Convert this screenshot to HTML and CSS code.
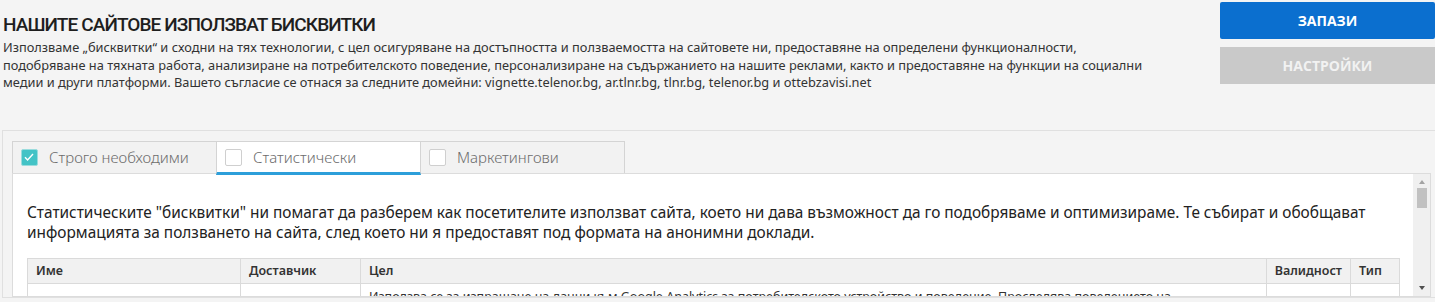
FILE: index.html
```html
<!DOCTYPE html>
<html lang="bg">
<head>
	<meta charset="utf-8">
	<title>Бисквитки</title>
	<link rel="stylesheet" href="styles.css">
</head>
<body>
	<div id="banner">
		<div class="intro">
			<h1 class="title">НАШИТЕ САЙТОВЕ ИЗПОЛЗВАТ БИСКВИТКИ</h1>
			<p class="lead">Използваме „бисквитки“ и сходни на тях технологии, с цел осигуряване на достъпността и ползваемостта на сайтовете ни, предоставяне на определени функционалности,<br>подобряване на тяхната работа, анализиране на потребителското поведение, персонализиране на съдържанието на нашите реклами, както и предоставяне на функции на социални<br>медии и други платформи. Вашето съгласие се отнася за следните домейни: vignette.telenor.bg, ar.tlnr.bg, tlnr.bg, telenor.bg и ottebzavisi.net</p>
		</div>
		<div class="actions">
			<button class="btn btn-save">ЗАПАЗИ</button>
			<button class="btn btn-settings">НАСТРОЙКИ</button>
		</div>
	</div>

	<div id="panel">
		<ul class="tabs">
			<li class="tab">
				<span class="check checked">
					<svg width="16" height="16" viewBox="0 0 16 16"><path d="M4 8.2l2.6 2.8L12 5" fill="none" stroke="#fff" stroke-width="1.4"/></svg>
				</span>
				Строго необходими
			</li>
			<li class="tab current">
				<span class="check"></span>
				Статистически
			</li>
			<li class="tab">
				<span class="check"></span>
				Маркетингови
			</li>
		</ul>

		<div class="tab-body">
			<div class="tab-content">
				<p class="desc">Статистическите "бисквитки" ни помагат да разберем как посетителите използват сайта, което ни дава възможност да го подобряваме и оптимизираме. Те събират и обобщават информацията за ползването на сайта, след което ни я предоставят под формата на анонимни доклади.</p>
				<table class="cookies">
					<tr>
						<th class="c-name">Име</th>
						<th class="c-vendor">Доставчик</th>
						<th class="c-goal">Цел</th>
						<th class="c-valid">Валидност</th>
						<th class="c-type">Тип</th>
					</tr>
					<tr>
						<td></td>
						<td></td>
						<td>Използва се за изпращане на данни към Google Analytics за потребителското устройство и поведение. Проследява поведението на</td>
						<td></td>
						<td></td>
					</tr>
				</table>
			</div>
			<div class="scrollbar">
				<span class="arrow up"></span>
				<span class="thumb"></span>
				<span class="arrow down"></span>
			</div>
		</div>
	</div>
</body>
</html>
```

FILE: styles.css
```css
*{
	margin: 0;
	padding: 0;
	box-sizing: border-box;
}
html{
	background: #f4f4f4;
}
body{
	font-family: "Noto Sans", "Open Sans", sans-serif;
	color: #222;
	height: 302px;
	overflow: hidden;
}
li{
	list-style: none;
}
#banner{
	display: flex;
	justify-content: space-between;
	padding-left: 3px;
}
.title{
	margin-top: 13px;
	font-family: Roboto, sans-serif;
	font-size: 19px;
	line-height: 24px;
	font-weight: 500;
	letter-spacing: -0.9px;
	color: #1e1e1e;
}
.lead{
	margin-top: 2px;
	font-size: 12.8px;
	line-height: 17.5px;
	color: #333;
	white-space: nowrap;
}
.actions{
	width: 215px;
	padding-top: 2px;
	display: flex;
	flex-direction: column;
	gap: 8px;
}
.btn{
	height: 37px;
	border: none;
	border-radius: 2px;
	font-family: "Open Sans", sans-serif;
	font-size: 14px;
	font-weight: 700;
	color: #fff;
}
.btn-save{
	background: #0b6fcf;
}
.btn-settings{
	background: #c9c9c9;
	color: #f2f2f2;
	border-radius: 0;
}
#panel{
	margin: 38px 0 0 2px;
	border: 1px solid #e0e0e0;
	border-right: none;
	padding: 10px 4px 0 9px;
}
.tabs{
	display: flex;
}
.tab{
	width: 205px;
	height: 32px;
	display: flex;
	align-items: center;
	gap: 11px;
	padding-left: 8px;
	border: 1px solid #d4d4d4;
	border-bottom: none;
	margin-right: -1px;
	background: #f2f2f2;
	font-size: 15px;
	font-weight: 300;
	color: #6c6c6c;
	cursor: pointer;
}
.tab.current{
	background: #fff;
	border-bottom: 3px solid #2d9fda;
	position: relative;
	z-index: 1;
	margin-bottom: -2px;
	height: 34px;
	padding-top: 1px;
}
.check{
	width: 17px;
	height: 17px;
	border: 1px solid #cfcfcf;
	border-radius: 2px;
	background: #fff;
	flex-shrink: 0;
}
.check.checked{
	background: #43c3c6;
	border-color: #9adcdd;
}
.check svg{
	display: block;
	margin: -1px;
}
.tab-body{
	display: flex;
	height: 124px;
	border: 1px solid #dcdcdc;
	background: #fff;
	overflow: hidden;
}
.tab-content{
	flex: 1;
	padding: 29px 13px 0 14px;
	overflow: hidden;
}
.desc{
	font-size: 15.4px;
	line-height: 20px;
	color: #222;
}
.cookies{
	margin-top: 15px;
	width: 100%;
	border-collapse: collapse;
	font-size: 12.5px;
	color: #333;
}
.cookies th,
.cookies td{
	border: 1px solid #dadada;
	text-align: left;
	padding: 3px 8px 4px;
	vertical-align: top;
}
.cookies th{
	background: #f1f1f1;
	font-weight: 600;
	height: 25px;
}
.cookies td{
	padding-top: 4px;
	height: 40px;
}
.c-name{ width: 213px; }
.c-vendor{ width: 120px; }
.c-valid{ width: 82px; }
.c-type{ width: 49px; }
.scrollbar{
	width: 17px;
	background: #f0f0f0;
	display: flex;
	flex-direction: column;
	align-items: center;
	padding: 6px 0;
}
.arrow{
	width: 0;
	height: 0;
	border-left: 3.5px solid transparent;
	border-right: 3.5px solid transparent;
}
.arrow.up{
	border-bottom: 4px solid #a3a3a3;
}
.arrow.down{
	margin-top: auto;
	border-top: 4px solid #505050;
}
.thumb{
	width: 10px;
	height: 20px;
	margin-top: 4px;
	background: #c1c1c1;
}
```
